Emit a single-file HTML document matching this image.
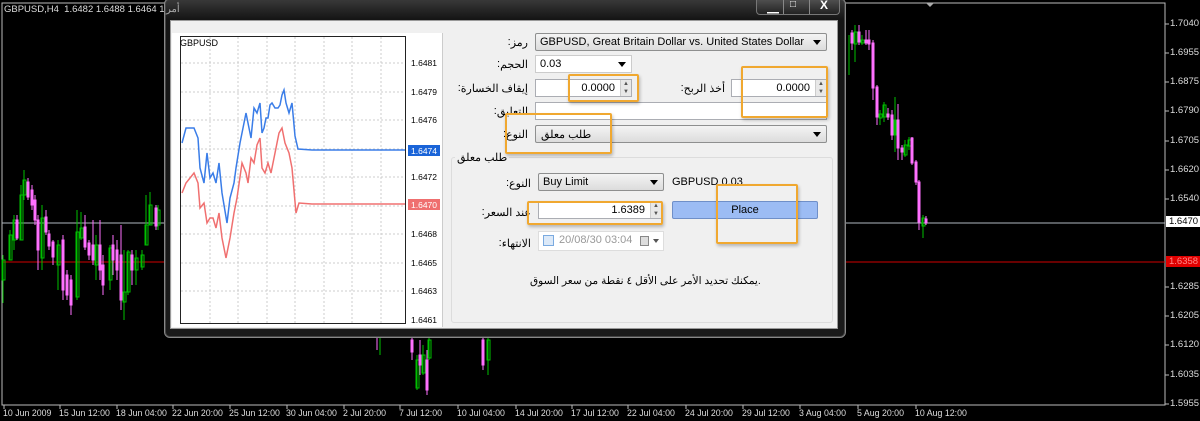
<!DOCTYPE html>
<html><head><meta charset="utf-8"><style>
*{margin:0;padding:0;box-sizing:border-box}
body{width:1200px;height:421px;background:#000;position:relative;overflow:hidden;font-family:"Liberation Sans","Noto Sans CJK SC",sans-serif;font-size:11px;color:#000}
.a{position:absolute}
.ax{color:#ddd;font-size:9.5px;position:absolute;white-space:nowrap}
.t{color:#ddd;font-size:8.8px;position:absolute;top:408px;white-space:nowrap}
.fld{position:absolute;background:#fff;border:1px solid #abadb3;height:18px;font-size:11px;padding:2px 4px;white-space:nowrap}
.cmb{position:absolute;background:linear-gradient(#f4f4f4,#dcdcdc);border:1px solid #8e8f8f;border-radius:2px;height:18px;font-size:11px;padding:2px 4px;white-space:nowrap}
.cmb:after{content:"";position:absolute;right:5px;top:6px;border:4px solid transparent;border-top:5px solid #000}
.lbl{position:absolute;font-size:11px;white-space:nowrap;display:flex;flex-direction:row;justify-content:flex-end;direction:ltr}
.lbl b{display:block;font-weight:normal;direction:rtl}
.lbl i{display:block;font-style:normal}
.or{position:absolute;border:2px solid #f0a830;border-radius:2px;box-shadow:1px 2px 3px rgba(0,0,0,.25)}
.spin{position:absolute;right:0;top:0;width:11px;height:16px;background:#e8e8e8;border-left:1px solid #ccc;font-size:6px;line-height:8px;text-align:center;color:#555}
</style></head><body>
<svg class="a" style="left:0;top:0" width="1200" height="421">
<rect x="2" y="3" width="1163" height="402" fill="none" stroke="#bbb" stroke-width="1"/>
<line x1="2" y1="223" x2="1165" y2="223" stroke="#b0b8c0"/>
<line x1="2" y1="262" x2="1165" y2="262" stroke="#d00000"/>
<g stroke-width="1">
<g stroke="#00c000" fill="none">
<line x1="3" y1="255" x2="3" y2="303"/><rect x="2" y="260" width="3" height="20"/>
<line x1="10" y1="230" x2="10" y2="260"/><rect x="9" y="235" width="3" height="25"/>
<line x1="14" y1="215" x2="14" y2="250"/><rect x="13" y="220" width="3" height="20"/>
<line x1="21" y1="185" x2="21" y2="240"/><rect x="20" y="195" width="3" height="45"/>
<line x1="24" y1="170" x2="24" y2="200"/><rect x="23" y="180" width="3" height="15"/>
<line x1="42" y1="205" x2="42" y2="270"/><rect x="41" y="218" width="3" height="40"/>
<line x1="58" y1="240" x2="58" y2="290"/><rect x="57" y="245" width="3" height="20"/>
<line x1="77" y1="210" x2="77" y2="300"/><rect x="76" y="232" width="3" height="65"/>
<line x1="81" y1="212" x2="81" y2="240"/><rect x="80" y="228" width="3" height="10"/>
<line x1="96" y1="235" x2="96" y2="280"/><rect x="95" y="245" width="3" height="20"/>
<line x1="110" y1="245" x2="110" y2="290"/><rect x="109" y="248" width="3" height="32"/>
<line x1="124" y1="250" x2="124" y2="320"/><rect x="123" y="292" width="3" height="10"/>
<line x1="128" y1="250" x2="128" y2="295"/><rect x="127" y="252" width="3" height="40"/>
<line x1="136" y1="250" x2="136" y2="285"/><rect x="135" y="258" width="3" height="12"/>
<line x1="142" y1="250" x2="142" y2="270"/><rect x="141" y="255" width="3" height="12"/>
<line x1="146" y1="195" x2="146" y2="245"/><rect x="145" y="225" width="3" height="20"/>
<line x1="150" y1="192" x2="150" y2="225"/><rect x="149" y="205" width="3" height="20"/>
<line x1="158" y1="205" x2="158" y2="230"/><rect x="157" y="210" width="3" height="15"/>
</g>
<g stroke="#ff70ff" fill="#ff70ff">
<line x1="17" y1="215" x2="17" y2="240"/><rect x="16" y="220" width="2" height="18"/>
<line x1="28" y1="178" x2="28" y2="200"/><rect x="27" y="182" width="2" height="15"/>
<line x1="32" y1="185" x2="32" y2="210"/><rect x="31" y="190" width="2" height="15"/>
<line x1="35" y1="195" x2="35" y2="225"/><rect x="34" y="200" width="2" height="20"/>
<line x1="38" y1="215" x2="38" y2="270"/><rect x="37" y="220" width="2" height="30"/>
<line x1="46" y1="210" x2="46" y2="235"/><rect x="45" y="217" width="2" height="15"/>
<line x1="49" y1="230" x2="49" y2="250"/><rect x="48" y="234" width="2" height="12"/>
<line x1="53" y1="240" x2="53" y2="265"/><rect x="52" y="242" width="2" height="15"/>
<line x1="63" y1="235" x2="63" y2="300"/><rect x="62" y="240" width="2" height="50"/>
<line x1="67" y1="270" x2="67" y2="300"/><rect x="66" y="275" width="2" height="20"/>
<line x1="71" y1="275" x2="71" y2="315"/><rect x="70" y="280" width="2" height="25"/>
<line x1="85" y1="215" x2="85" y2="250"/><rect x="84" y="227" width="2" height="20"/>
<line x1="89" y1="240" x2="89" y2="260"/><rect x="88" y="243" width="2" height="12"/>
<line x1="93" y1="220" x2="93" y2="265"/><rect x="92" y="245" width="2" height="15"/>
<line x1="100" y1="220" x2="100" y2="280"/><rect x="99" y="245" width="2" height="25"/>
<line x1="103" y1="255" x2="103" y2="295"/><rect x="102" y="265" width="2" height="20"/>
<line x1="113" y1="235" x2="113" y2="275"/><rect x="112" y="245" width="2" height="15"/>
<line x1="117" y1="240" x2="117" y2="280"/><rect x="116" y="250" width="2" height="20"/>
<line x1="121" y1="225" x2="121" y2="310"/><rect x="120" y="255" width="2" height="45"/>
<line x1="132" y1="250" x2="132" y2="285"/><rect x="131" y="255" width="2" height="15"/>
<line x1="156" y1="205" x2="156" y2="230"/><rect x="155" y="208" width="2" height="18"/>
</g>
<g stroke="#00c000" fill="none">
<line x1="380" y1="337" x2="380" y2="355"/>
<line x1="417" y1="355" x2="417" y2="390"/><rect x="416" y="360" width="3" height="28"/>
<line x1="423" y1="345" x2="423" y2="375"/><rect x="422" y="355" width="3" height="18"/>
<line x1="429" y1="337" x2="429" y2="360"/><rect x="428" y="340" width="3" height="18"/>
<line x1="488" y1="337" x2="488" y2="375"/><rect x="487" y="340" width="3" height="20"/>
</g>
<g stroke="#ff70ff" fill="#ff70ff">
<line x1="377" y1="337" x2="377" y2="350"/>
<line x1="412" y1="337" x2="412" y2="360"/><rect x="411" y="340" width="2" height="12"/>
<line x1="420" y1="340" x2="420" y2="375"/><rect x="419" y="355" width="2" height="10"/>
<line x1="427" y1="350" x2="427" y2="395"/><rect x="426" y="360" width="2" height="30"/>
<line x1="483" y1="337" x2="483" y2="370"/><rect x="482" y="340" width="2" height="25"/>
</g>
<g stroke="#00c000" fill="none">
<line x1="849" y1="35" x2="849" y2="75"/>
<line x1="855" y1="25" x2="855" y2="62"/><rect x="854" y="32" width="3" height="12"/>
<line x1="862" y1="35" x2="862" y2="45"/><rect x="861" y="40" width="3" height="3"/>
<line x1="880" y1="110" x2="880" y2="125"/><rect x="879" y="114" width="3" height="4"/>
<line x1="884" y1="102" x2="884" y2="122"/><rect x="883" y="105" width="3" height="12"/>
<line x1="895" y1="97" x2="895" y2="152"/><rect x="894" y="120" width="2" height="15"/>
<line x1="905" y1="140" x2="905" y2="157"/><rect x="904" y="145" width="3" height="10"/>
<line x1="909" y1="137" x2="909" y2="150"/><rect x="908" y="140" width="3" height="6"/>
<line x1="923" y1="215" x2="923" y2="238"/><rect x="922" y="218" width="3" height="8"/>
</g>
<g stroke="#ff70ff" fill="#ff70ff">
<line x1="852" y1="30" x2="852" y2="50"/><rect x="851" y="33" width="2" height="10"/>
<line x1="859" y1="25" x2="859" y2="45"/><rect x="858" y="32" width="2" height="10"/>
<line x1="866" y1="30" x2="866" y2="45"/><rect x="865" y="40" width="2" height="3"/>
<line x1="869" y1="30" x2="869" y2="50"/><rect x="868" y="40" width="2" height="4"/>
<line x1="873" y1="40" x2="873" y2="100"/><rect x="872" y="43" width="2" height="45"/>
<line x1="877" y1="85" x2="877" y2="125"/><rect x="876" y="87" width="2" height="30"/>
<line x1="888" y1="108" x2="888" y2="120"/><rect x="887" y="114" width="2" height="3"/>
<line x1="892" y1="110" x2="892" y2="140"/><rect x="891" y="115" width="2" height="20"/>
<line x1="898" y1="104" x2="898" y2="160"/><rect x="897" y="120" width="2" height="28"/>
<line x1="902" y1="145" x2="902" y2="160"/><rect x="901" y="148" width="2" height="4"/>
<line x1="912" y1="137" x2="912" y2="165"/><rect x="911" y="138" width="2" height="25"/>
<line x1="916" y1="160" x2="916" y2="185"/><rect x="915" y="162" width="2" height="20"/>
<line x1="919" y1="180" x2="919" y2="230"/><rect x="918" y="182" width="2" height="40"/>
<line x1="926" y1="216" x2="926" y2="225"/><rect x="925" y="219" width="2" height="4"/>
</g>
</g>
<path d="M926 3 L934 3 L930 7Z" fill="#aaa"/>
<g stroke="#bbb"><line x1="1165" y1="24" x2="1169" y2="24"/><line x1="1165" y1="53" x2="1169" y2="53"/><line x1="1165" y1="82" x2="1169" y2="82"/><line x1="1165" y1="111" x2="1169" y2="111"/><line x1="1165" y1="141" x2="1169" y2="141"/><line x1="1165" y1="170" x2="1169" y2="170"/><line x1="1165" y1="199" x2="1169" y2="199"/><line x1="1165" y1="287" x2="1169" y2="287"/><line x1="1165" y1="316" x2="1169" y2="316"/><line x1="1165" y1="345" x2="1169" y2="345"/><line x1="1165" y1="375" x2="1169" y2="375"/><line x1="1165" y1="404" x2="1169" y2="404"/></g>
<g stroke="#bbb"><line x1="4" y1="405" x2="4" y2="409"/><line x1="60" y1="405" x2="60" y2="409"/><line x1="117" y1="405" x2="117" y2="409"/><line x1="173" y1="405" x2="173" y2="409"/><line x1="230" y1="405" x2="230" y2="409"/><line x1="287" y1="405" x2="287" y2="409"/><line x1="344" y1="405" x2="344" y2="409"/><line x1="400" y1="405" x2="400" y2="409"/><line x1="458" y1="405" x2="458" y2="409"/><line x1="516" y1="405" x2="516" y2="409"/><line x1="572" y1="405" x2="572" y2="409"/><line x1="628" y1="405" x2="628" y2="409"/><line x1="686" y1="405" x2="686" y2="409"/><line x1="743" y1="405" x2="743" y2="409"/><line x1="800" y1="405" x2="800" y2="409"/><line x1="858" y1="405" x2="858" y2="409"/><line x1="916" y1="405" x2="916" y2="409"/></g>
</svg>
<div class="ax" style="left:4px;top:4px;font-size:9.5px">GBPUSD,H4&nbsp; 1.6482 1.6488 1.6464 1.647</div>
<div class="ax" style="left:1170px;top:18px">1.7040</div>
<div class="ax" style="left:1170px;top:47px">1.6955</div>
<div class="ax" style="left:1170px;top:76px">1.6875</div>
<div class="ax" style="left:1170px;top:105px">1.6790</div>
<div class="ax" style="left:1170px;top:135px">1.6705</div>
<div class="ax" style="left:1170px;top:164px">1.6620</div>
<div class="ax" style="left:1170px;top:193px">1.6540</div>
<div class="ax" style="left:1166px;top:216px;background:#fff;color:#000;padding:0 3px">1.6470</div>
<div class="ax" style="left:1166px;top:256px;background:#e00000;color:#f88;padding:0 3px">1.6358</div>
<div class="ax" style="left:1170px;top:281px">1.6285</div>
<div class="ax" style="left:1170px;top:310px">1.6205</div>
<div class="ax" style="left:1170px;top:339px">1.6120</div>
<div class="ax" style="left:1170px;top:369px">1.6035</div>
<div class="ax" style="left:1170px;top:398px">1.5955</div>
<div class="t" style="left:3px">10 Jun 2009</div>
<div class="t" style="left:59px">15 Jun 12:00</div>
<div class="t" style="left:116px">18 Jun 04:00</div>
<div class="t" style="left:172px">22 Jun 20:00</div>
<div class="t" style="left:229px">25 Jun 12:00</div>
<div class="t" style="left:286px">30 Jun 04:00</div>
<div class="t" style="left:343px">2 Jul 20:00</div>
<div class="t" style="left:399px">7 Jul 12:00</div>
<div class="t" style="left:457px">10 Jul 04:00</div>
<div class="t" style="left:515px">14 Jul 20:00</div>
<div class="t" style="left:571px">17 Jul 12:00</div>
<div class="t" style="left:627px">22 Jul 04:00</div>
<div class="t" style="left:685px">24 Jul 20:00</div>
<div class="t" style="left:742px">29 Jul 12:00</div>
<div class="t" style="left:799px">3 Aug 04:00</div>
<div class="t" style="left:857px">5 Aug 20:00</div>
<div class="t" style="left:915px">10 Aug 12:00</div>

<div class="a" style="left:164px;top:-2px;width:682px;height:340px;border-radius:6px;background:linear-gradient(#3a3a3a,#151515 20px,#1a1a1a);border:1px solid #888;box-shadow:inset 0 0 0 1px #444"></div>
<div class="a" style="left:166px;top:4px;color:#aaa;font-size:10px">أمر</div>
<div class="a" style="left:756px;top:-2px;width:84px;height:17px;border:1px solid #777;border-top:none;border-radius:0 0 4px 4px;background:linear-gradient(#555,#222);color:#fff;font-size:12px;font-weight:bold">
<span class="a" style="left:10px;top:1px">▁</span><span class="a" style="left:33px;top:1px;font-size:10px">□</span><span class="a" style="left:63px;top:0">X</span>
<div class="a" style="left:26px;top:0;width:1px;height:16px;background:#888"></div><div class="a" style="left:52px;top:0;width:1px;height:16px;background:#888"></div></div>
<div class="a" style="left:170px;top:20px;width:668px;height:309px;background:#f0f0f0;border:1px solid #999"></div>
<div class="a" style="left:172px;top:33px;width:271px;height:294px;background:#fff;border-right:1px solid #ccc"></div>
<svg class="a" style="left:172px;top:33px" width="271" height="294">
<rect x="8.5" y="3.5" width="225" height="287" fill="#fff" stroke="#222"/>
<g stroke="#ccc" stroke-dasharray="2,2">
<line x1="9" y1="30" x2="233" y2="30"/><line x1="9" y1="59" x2="233" y2="59"/><line x1="9" y1="87" x2="233" y2="87"/><line x1="9" y1="116" x2="233" y2="116"/><line x1="9" y1="144" x2="233" y2="144"/><line x1="9" y1="173" x2="233" y2="173"/><line x1="9" y1="201" x2="233" y2="201"/><line x1="9" y1="230" x2="233" y2="230"/><line x1="9" y1="258" x2="233" y2="258"/>
<line x1="38" y1="4" x2="38" y2="290"/><line x1="66" y1="4" x2="66" y2="290"/><line x1="95" y1="4" x2="95" y2="290"/><line x1="123" y1="4" x2="123" y2="290"/><line x1="152" y1="4" x2="152" y2="290"/><line x1="180" y1="4" x2="180" y2="290"/><line x1="209" y1="4" x2="209" y2="290"/>
</g>
<polyline fill="none" stroke="#3a7de8" stroke-width="1.5" points="10,110 14,95 18,95 22,95 26,105 28,135 32,150 35,120 38,145 41,140 44,150 47,130 50,160 55,190 58,165 62,150 64,135 68,110 71,95 74,80 77,95 79,105 82,75 85,80 88,70 90,100 92,95 94,85 96,85 98,72 100,70 103,75 106,75 108,72 110,62 112,57 114,70 117,80 120,70 123,103 126,116 140,117 233,117"/>
<polyline fill="none" stroke="#f07070" stroke-width="1.5" points="10,160 14,150 18,145 22,140 26,150 28,175 32,170 35,190 38,185 41,185 44,195 47,180 50,205 54,225 58,205 62,180 65,165 70,130 74,140 76,150 79,125 82,130 85,112 88,105 90,135 93,140 96,130 99,140 102,125 105,110 107,100 110,95 113,110 117,120 120,135 124,180 127,170 140,171 233,171"/>
<text x="8" y="13" font-size="9" font-family="Liberation Sans">GBPUSD</text>
<g font-size="8.5" font-family="Liberation Sans"><text x="239" y="33">1.6481</text><text x="239" y="62">1.6479</text><text x="239" y="90">1.6476</text><text x="239" y="147">1.6472</text><text x="239" y="204">1.6468</text><text x="239" y="233">1.6465</text><text x="239" y="261">1.6463</text><text x="239" y="290">1.6461</text></g>
<rect x="236" y="112" width="32" height="11" fill="#1a64d8"/><text x="239" y="121" font-size="8.5" fill="#fff" font-family="Liberation Sans">1.6474</text>
<rect x="236" y="166" width="32" height="11" fill="#ef6f6f"/><text x="239" y="175" font-size="8.5" fill="#fff" font-family="Liberation Sans">1.6470</text>
</svg>
<div class="lbl" style="left:430px;top:36px;width:98px"><i>:</i><b>رمز</b></div>
<div class="cmb" style="left:535px;top:33px;width:292px">GBPUSD, Great Britain Dollar vs. United States Dollar</div>
<div class="lbl" style="left:430px;top:58px;width:98px"><i>:</i><b>الحجم</b></div>
<div class="fld" style="left:535px;top:55px;width:97px;border-color:#ccc">0.03<span style="position:absolute;right:5px;top:6px;border:4px solid transparent;border-top:5px solid #000"></span></div>
<div class="lbl" style="left:430px;top:82px;width:98px"><i>:</i><b>إيقاف الخسارة</b></div>
<div class="fld" style="left:535px;top:79px;width:97px;text-align:right;padding-right:16px">0.0000<span class="spin">▲<br>▼</span></div>
<div class="lbl" style="left:630px;top:82px;width:95px"><i>:</i><b>أخذ الربح</b></div>
<div class="fld" style="left:731px;top:79px;width:96px;text-align:right;padding-right:16px">0.0000<span class="spin">▲<br>▼</span></div>
<div class="lbl" style="left:430px;top:105px;width:98px"><i>:</i><b>التعليق</b></div>
<div class="fld" style="left:535px;top:102px;width:292px"></div>
<div class="lbl" style="left:430px;top:128px;width:98px"><i>:</i><b>النوع</b></div>
<div class="cmb" style="left:535px;top:125px;width:292px"><span style="position:absolute;left:5px">طلب معلق</span></div>
<div class="a" style="left:451px;top:157px;width:382px;height:166px;border:1px solid #dcdcdc;border-radius:3px"></div>
<div class="lbl" style="left:455px;top:151px;background:#f0f0f0;padding:0 2px"><b>طلب معلق</b></div>
<div class="lbl" style="left:440px;top:177px;width:91px"><i>:</i><b>النوع</b></div>
<div class="cmb" style="left:538px;top:173px;width:126px">Buy Limit</div>
<div class="a" style="left:672px;top:176px;font-size:11px">GBPUSD 0.03</div>
<div class="lbl" style="left:440px;top:206px;width:91px"><i>:</i><b>عند السعر</b></div>
<div class="fld" style="left:538px;top:201px;width:124px;text-align:right;padding-right:16px">1.6389<span class="spin">▲<br>▼</span></div>
<div class="a" style="left:672px;top:201px;width:146px;height:18px;background:#9cbcf4;border:1px solid #6f8fc8;border-radius:2px;text-align:center;font-size:11px;line-height:16px">Place</div>
<div class="lbl" style="left:440px;top:237px;width:91px"><i>:</i><b>الانتهاء</b></div>
<div class="fld" style="left:538px;top:231px;width:126px;height:20px;color:#999;border-color:#ddd;padding-left:20px">20/08/30 03:04<span class="a" style="left:4px;top:3px;width:11px;height:11px;border:1px solid #7aaae0;background:#dce9f8"></span><span class="a" style="right:14px;top:4px;width:9px;height:10px;border:1px solid #888;background:#ddd"></span><span style="position:absolute;right:4px;top:7px;border:3px solid transparent;border-top:4px solid #555"></span></div>
<div class="lbl" style="left:530px;top:275px;font-size:10.5px"><b>يمكنك تحديد الأمر على الأقل ٤ نقطة من سعر السوق</b><i>.</i></div>
<div class="or" style="left:568px;top:74px;width:71px;height:28px"></div>
<div class="or" style="left:741px;top:66px;width:87px;height:52px"></div>
<div class="or" style="left:505px;top:113px;width:107px;height:41px"></div>
<div class="or" style="left:527px;top:201px;width:136px;height:24px"></div>
<div class="or" style="left:716px;top:184px;width:82px;height:60px"></div>
</body></html>
